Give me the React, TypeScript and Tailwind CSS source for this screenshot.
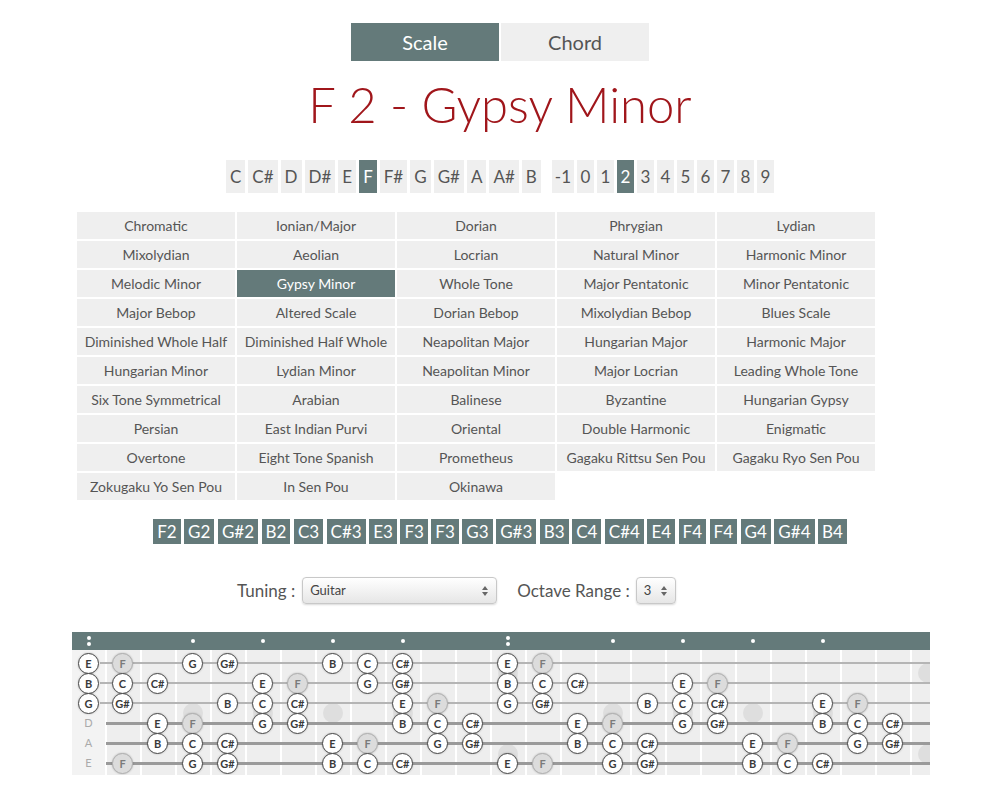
import React from "react";

const NOTES = ["C", "C#", "D", "D#", "E", "F", "F#", "G", "G#", "A", "A#", "B"];
const OCTAVES = ["-1", "0", "1", "2", "3", "4", "5", "6", "7", "8", "9"];

const SCALES = [
  "Chromatic", "Ionian/Major", "Dorian", "Phrygian", "Lydian",
  "Mixolydian", "Aeolian", "Locrian", "Natural Minor", "Harmonic Minor",
  "Melodic Minor", "Gypsy Minor", "Whole Tone", "Major Pentatonic", "Minor Pentatonic",
  "Major Bebop", "Altered Scale", "Dorian Bebop", "Mixolydian Bebop", "Blues Scale",
  "Diminished Whole Half", "Diminished Half Whole", "Neapolitan Major", "Hungarian Major", "Harmonic Major",
  "Hungarian Minor", "Lydian Minor", "Neapolitan Minor", "Major Locrian", "Leading Whole Tone",
  "Six Tone Symmetrical", "Arabian", "Balinese", "Byzantine", "Hungarian Gypsy",
  "Persian", "East Indian Purvi", "Oriental", "Double Harmonic", "Enigmatic",
  "Overtone", "Eight Tone Spanish", "Prometheus", "Gagaku Rittsu Sen Pou", "Gagaku Ryo Sen Pou",
  "Zokugaku Yo Sen Pou", "In Sen Pou", "Okinawa",
];

const CHIPS = [
  "F2", "G2", "G#2", "B2", "C3", "C#3", "E3", "F3", "F3", "G3",
  "G#3", "B3", "C4", "C#4", "E4", "F4", "F4", "G4", "G#4", "B4",
];

// fretboard data
const STRINGS = [
  { name: "E", midi: 64, thick: false },
  { name: "B", midi: 59, thick: false },
  { name: "G", midi: 55, thick: false },
  { name: "D", midi: 50, thick: true },
  { name: "A", midi: 45, thick: true },
  { name: "E", midi: 40, thick: true },
];
const ROOT = 5;
const SCALE_PCS = [0, 2, 3, 6, 7, 8, 11].map((i) => (ROOT + i) % 12);
const LOW = 41;
const HIGH = 77;
const FRETS = 24;
const OPEN_W = 33;
const FRET_W = 35;
const SINGLE_DOTS = [3, 5, 7, 9, 15, 17, 19, 21];
const DOUBLE_DOTS = [12, 24];

const fretX = (f: number) => (f === 0 ? 16.5 : OPEN_W + (f - 0.5) * FRET_W);
const stringY = (i: number) => 13 + i * 20;

const SelectArrows = () => (
  <svg width="8" height="12" viewBox="0 0 8 12" className="shrink-0">
    <path d="M4 1 L7 5 L1 5 Z" fill="#666" />
    <path d="M4 11 L7 7 L1 7 Z" fill="#666" />
  </svg>
);

const NoteCircle = ({ x, y, label, root }: { x: number; y: number; label: string; root: boolean }) => (
  <div
    className={
      "absolute w-[21px] h-[21px] -ml-[10.5px] -mt-[10.5px] rounded-full flex items-center justify-center text-[11px] font-bold leading-none shadow-[0_0_2px_rgba(0,0,0,0.25)] " +
      (root ? "bg-[#dcdcdc] border border-[#b0b0b0] text-[#7a7a7a]" : "bg-white border-[1.5px] border-[#4a4a4a] text-[#3a3a3a]")
    }
    style={{ left: x, top: y }}
  >
    {label}
  </div>
);

const Fretboard = () => {
  const notes: { x: number; y: number; label: string; root: boolean }[] = [];
  const labels: { y: number; label: string }[] = [];
  STRINGS.forEach((s, si) => {
    for (let f = 0; f < FRETS; f++) {
      const m = s.midi + f;
      const pc = m % 12;
      const inScale = SCALE_PCS.includes(pc) && m >= LOW && m <= HIGH;
      if (inScale) {
        notes.push({ x: fretX(f), y: stringY(si), label: NOTES[pc], root: pc === ROOT });
      } else if (f === 0) {
        labels.push({ y: stringY(si), label: s.name });
      }
    }
  });

  return (
    <div className="w-[858px] overflow-hidden">
      {/* header with position dots */}
      <div className="relative h-[18px] bg-[#647a7a]">
        {[0, ...SINGLE_DOTS, 12].map((f) => {
          const double = f === 0 || f === 12;
          return double ? (
            <React.Fragment key={f}>
              <div className="absolute w-[4px] h-[4px] -ml-[2px] rounded-full bg-white" style={{ left: fretX(f), top: 4 }} />
              <div className="absolute w-[4px] h-[4px] -ml-[2px] rounded-full bg-white" style={{ left: fretX(f), top: 10 }} />
            </React.Fragment>
          ) : (
            <div key={f} className="absolute w-[4px] h-[4px] -ml-[2px] rounded-full bg-white" style={{ left: fretX(f), top: 7 }} />
          );
        })}
      </div>
      {/* body */}
      <div className="relative h-[125px]">
        <div className="flex h-full">
          <div className="w-[33px] shrink-0 bg-[#f3f3f3]" />
          {Array.from({ length: FRETS }).map((_, i) => (
            <div key={i} className="w-[35px] shrink-0 bg-[#eeeeee] border-l-2 border-white" />
          ))}
        </div>
        {SINGLE_DOTS.map((f) => (
          <div key={f} className="absolute w-[20px] h-[20px] -ml-[10px] -mt-[10px] rounded-full bg-[#dedede]" style={{ left: fretX(f), top: 63 }} />
        ))}
        {DOUBLE_DOTS.map((f) => (
          <React.Fragment key={f}>
            <div className="absolute w-[20px] h-[20px] -ml-[10px] -mt-[10px] rounded-full bg-[#dedede]" style={{ left: fretX(f), top: 23 }} />
            <div className="absolute w-[20px] h-[20px] -ml-[10px] -mt-[10px] rounded-full bg-[#dedede]" style={{ left: fretX(f), top: 104 }} />
          </React.Fragment>
        ))}
        {STRINGS.map((s, si) => (
          <div
            key={si}
            className={"absolute right-0 " + (s.thick ? "left-[34px] h-[3px] -mt-[1.5px] bg-[#9a9a9a]" : "left-[28px] h-[2px] -mt-[1px] bg-[#b5b5b5]")}
            style={{ top: stringY(si) }}
          />
        ))}
        {labels.map((l, i) => (
          <div key={i} className="absolute w-[20px] -ml-[10px] -mt-[7px] text-center text-[11px] leading-[14px] text-[#aaaaaa]" style={{ left: 16.5, top: l.y }}>
            {l.label}
          </div>
        ))}
        {notes.map((n, i) => (
          <NoteCircle key={i} {...n} />
        ))}
      </div>
    </div>
  );
};

export default function App() {
  return (
    <div className="w-full min-h-[800px] bg-white font-['Lato','Open_Sans',sans-serif] text-[#555]">
      <div className="flex flex-col items-center">
        {/* tabs */}
        <div className="flex gap-[2px] mt-[23px]">
          <div className="w-[148px] h-[38px] flex items-center justify-center bg-[#647a7a] text-white text-[20px]">Scale</div>
          <div className="w-[148px] h-[38px] flex items-center justify-center bg-[#efefef] text-[#555] text-[20px]">Chord</div>
        </div>

        {/* title */}
        <h1 className="mt-[19px] text-[49px] leading-none font-light text-[#a0161b]">F 2 - Gypsy Minor</h1>

        {/* key + octave selector */}
        <div className="flex mt-[31px] gap-[11px]">
          <div className="flex gap-[3px]">
            {NOTES.map((n) => (
              <div
                key={n}
                className={"h-[33px] px-[4px] flex items-center justify-center text-[17px] " + (n === "F" ? "bg-[#647a7a] text-white" : "bg-[#efefef] text-[#555]")}
              >
                {n}
              </div>
            ))}
          </div>
          <div className="flex gap-[3px]">
            {OCTAVES.map((o) => (
              <div
                key={o}
                className={"h-[33px] min-w-[17px] px-[3px] flex items-center justify-center text-[17px] " + (o === "2" ? "bg-[#647a7a] text-white" : "bg-[#efefef] text-[#555]")}
              >
                {o}
              </div>
            ))}
          </div>
        </div>
      </div>

      {/* scale grid */}
      <div className="pl-[77px] mt-[19px]">
        <div className="grid grid-cols-5 gap-[2px] w-[798px]">
          {SCALES.map((s) => (
            <div
              key={s}
              className={"h-[27px] flex items-center justify-center text-[14px] " + (s === "Gypsy Minor" ? "bg-[#647a7a] text-white" : "bg-[#efefef] text-[#555]")}
            >
              {s}
            </div>
          ))}
        </div>
      </div>

      <div className="flex flex-col items-center">
        {/* scale notes */}
        <div className="flex gap-[3.5px] mt-[19px]">
          {CHIPS.map((c, i) => (
            <div key={i} className="h-[25px] px-[4px] flex items-center bg-[#647a7a] text-white text-[17px]">
              {c}
            </div>
          ))}
        </div>
      </div>

      {/* tuning + octave range */}
      <div className="flex items-center mt-[33px] pl-[237px] text-[17px] text-[#555]">
        <span>Tuning :</span>
        <div className="ml-[7px] w-[195px] h-[27px] flex items-center justify-between px-[7px] rounded-[4px] border border-[#c8c8c8] bg-gradient-to-b from-white to-[#e6e6e6] shadow-[0_1px_2px_rgba(0,0,0,0.15)]">
          <span className="text-[13px] text-[#444]">Guitar</span>
          <SelectArrows />
        </div>
        <span className="ml-[20px]">Octave Range :</span>
        <div className="ml-[6px] w-[40px] h-[27px] flex items-center justify-between px-[7px] rounded-[4px] border border-[#c8c8c8] bg-gradient-to-b from-white to-[#e6e6e6] shadow-[0_1px_2px_rgba(0,0,0,0.15)]">
          <span className="text-[13px] text-[#444]">3</span>
          <SelectArrows />
        </div>
      </div>

      {/* fretboard */}
      <div className="pl-[72px] mt-[28px]">
        <Fretboard />
      </div>
    </div>
  );
}
